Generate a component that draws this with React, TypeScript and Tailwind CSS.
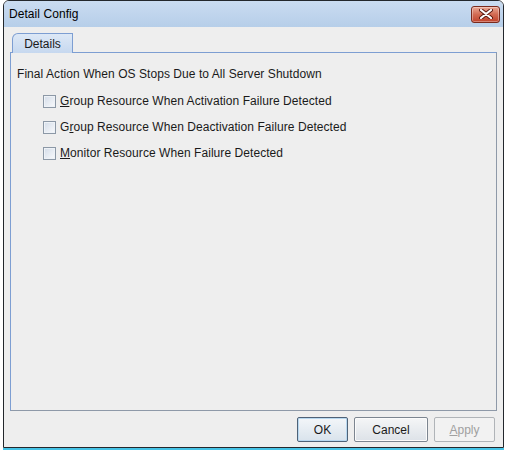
const FONT = "font-['Liberation_Sans',Arial,sans-serif]";

const OPTIONS = [
  { pre: "", key: "G", post: "roup Resource When Activation Failure Detected" },
  { pre: "G", key: "r", post: "oup Resource When Deactivation Failure Detected" },
  { pre: "", key: "M", post: "onitor Resource When Failure Detected" },
];

function CloseButton() {
  return (
    <div className="w-[29px] h-[17px] rounded-[3px] border border-[#7a2a1c] bg-gradient-to-b from-[#e9a794] via-[#d26a52] to-[#c0402a] flex items-center justify-center shadow-[inset_0_0_0_1px_rgba(255,255,255,0.35)]">
      <svg width="14" height="10" viewBox="0 0 14 10">
        <path
          d="M2 1 L12 9 M12 1 L2 9"
          stroke="#5a1a10"
          strokeWidth="4"
          strokeLinecap="round"
        />
        <path
          d="M2 1 L12 9 M12 1 L2 9"
          stroke="#ffffff"
          strokeWidth="2.2"
          strokeLinecap="round"
        />
      </svg>
    </div>
  );
}

function CheckRow({ pre, keyChar, post }: { pre: string; keyChar: string; post: string }) {
  return (
    <div className="h-[26px] flex items-center pl-[32px] gap-[4px]">
      <div className="w-[13px] h-[13px] border border-[#8c98a6] bg-gradient-to-br from-[#d3dce8] to-[#f9fafc] shadow-[inset_0_0_0_1px_#eef2f7]" />
      <span className="text-[12px] leading-[15px] tracking-[0.06px] text-[#1a1a1a]">
        {pre}
        <span className="underline underline-offset-1">{keyChar}</span>
        {post}
      </span>
    </div>
  );
}

function Button({
  children,
  width,
  variant = "normal",
}: {
  children: React.ReactNode;
  width: string;
  variant?: "normal" | "default" | "disabled";
}) {
  const look =
    variant === "default"
      ? "border-[#4f6277] shadow-[inset_0_0_0_1px_#b8d8f0] bg-gradient-to-b from-[#f3f6f9] to-[#d9e3ec] text-[#1a1a1a]"
      : variant === "disabled"
        ? "border-[#b0b4b8] bg-[#f2f2f2] text-[#a0a0a0]"
        : "border-[#7c8590] shadow-[inset_0_0_0_1px_#fbfbfb] bg-gradient-to-b from-[#f5f6f7] to-[#dde2e8] text-[#1a1a1a]";
  return (
    <div
      className={`${width} h-[25px] rounded-[2px] border flex items-center justify-center text-[12px] ${look}`}
    >
      {children}
    </div>
  );
}

export default function App() {
  return (
    <div className={`w-[506px] h-[452px] bg-white pl-[3px] ${FONT}`}>
      <div className="w-[501px] h-[448px] border border-[#23272c] rounded-t-[6px] flex flex-col overflow-hidden shadow-[0_2px_0_#45c3e6]">
        {/* title bar */}
        <div className="h-[26px] shrink-0 bg-gradient-to-b from-[#cadcf1] to-[#b6cee9] flex items-center justify-between pl-[5px] pr-[3px]">
          <span className="text-[12px] tracking-[0.06px] text-black">Detail Config</span>
          <CloseButton />
        </div>

        {/* body */}
        <div className="flex-1 bg-[#eeeeee] flex flex-col px-[6px] pt-[6px] pb-[5px]">
          <div className="h-[19px] flex pl-[2px]">
            <div className="w-[61px] h-[20px] border border-b-0 border-[#7d9ed2] rounded-tl-[6px] bg-gradient-to-b from-[#dde8f6] to-[#c6d8ef] flex items-center justify-center text-[12px] text-[#1a1a1a] relative z-10">
              Details
            </div>
          </div>
          <div className="flex-1 border border-l-[#7d9ed2] border-t-[#7d9ed2] border-r-[#8e99a8] border-b-[#8e99a8] pt-[14px]">
            <div className="pl-[6px] text-[12px] leading-[15px] tracking-[0.06px] text-[#1a1a1a]">
              Final Action When OS Stops Due to All Server Shutdown
            </div>
            <div className="mt-[6px] flex flex-col">
              {OPTIONS.map((o) => (
                <CheckRow key={o.post} pre={o.pre} keyChar={o.key} post={o.post} />
              ))}
            </div>
          </div>
          <div className="mt-[6px] flex justify-end gap-[6px] pr-[2px]">
            <Button width="w-[51px]" variant="default">
              OK
            </Button>
            <Button width="w-[74px]">Cancel</Button>
            <Button width="w-[61px]" variant="disabled">
              <span>
                <span className="underline underline-offset-1">A</span>pply
              </span>
            </Button>
          </div>
        </div>
      </div>
    </div>
  );
}
